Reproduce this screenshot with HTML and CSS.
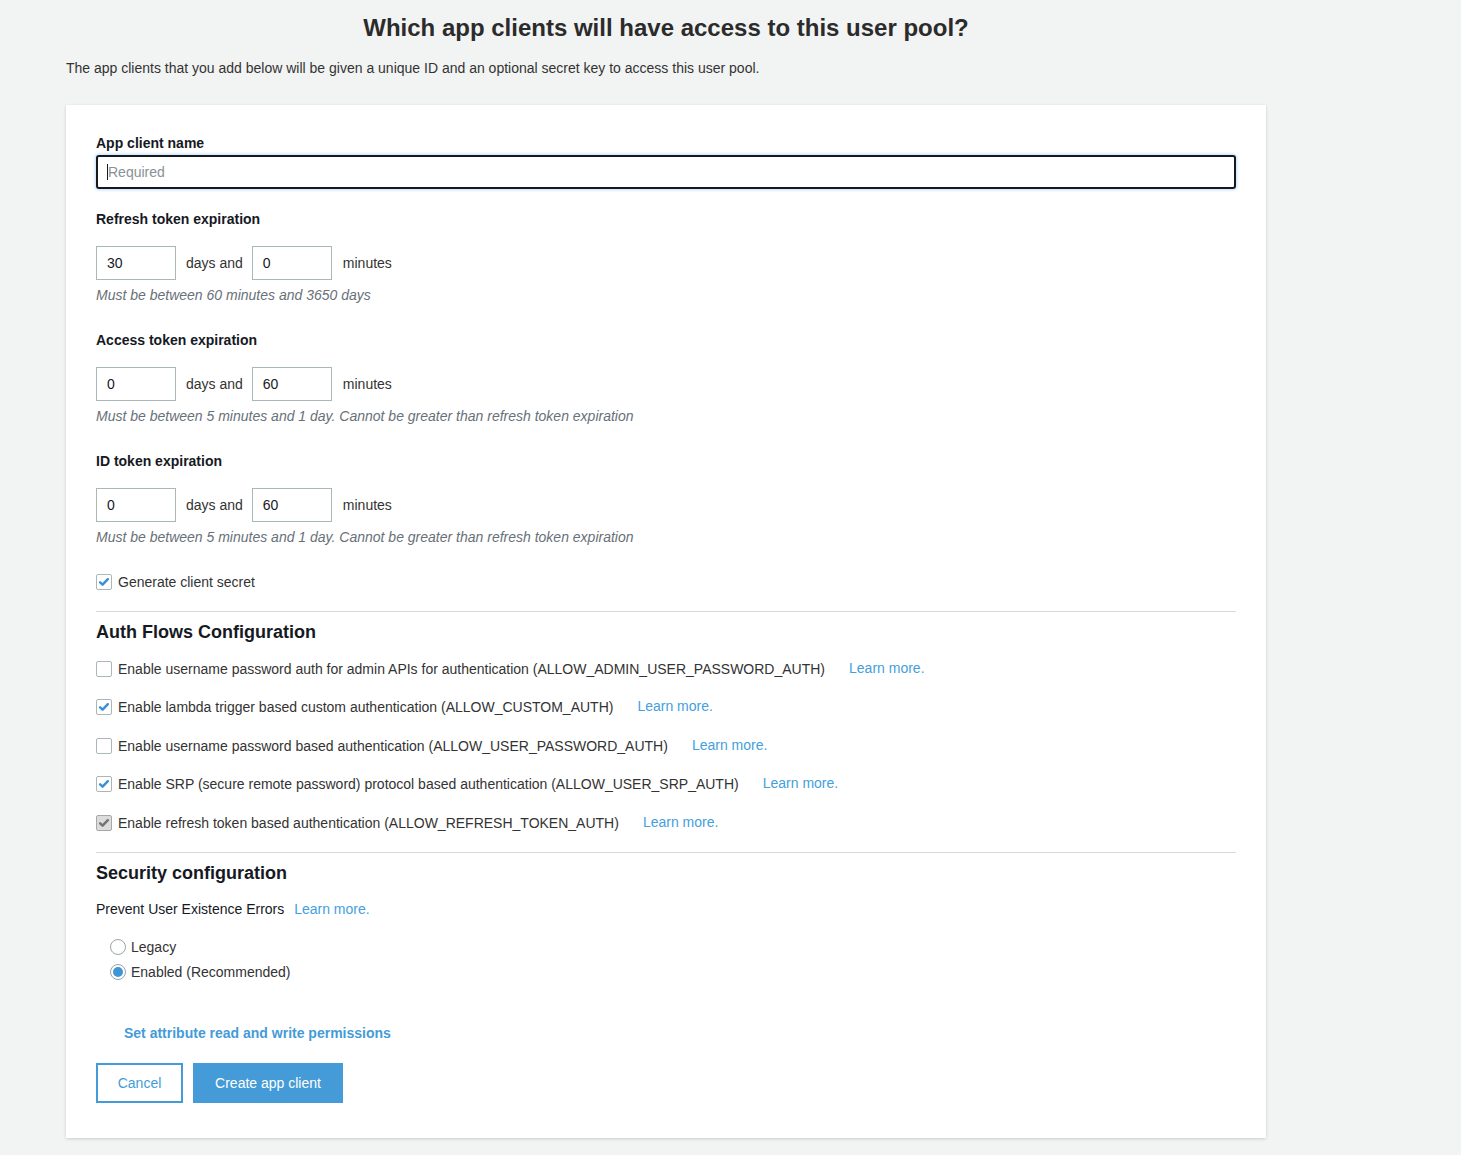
FILE: index.html
```html
<!DOCTYPE html>
<html>
<head>
<meta charset="utf-8">
<link rel="stylesheet" href="styles.css">
</head>
<body>
<div class="page">
  <h1 class="title">Which app clients will have access to this user pool?</h1>
  <p class="intro">The app clients that you add below will be given a unique ID and an optional secret key to access this user pool.</p>
  <div class="card">
    <label class="label">App client name</label>
    <div class="name-input"><span class="caret"></span><span class="placeholder">Required</span></div>

    <div class="label sect">Refresh token expiration</div>
    <div class="dur">
      <div class="box">30</div><span class="unit days">days and</span><div class="box">0</div><span class="unit mins">minutes</span>
    </div>
    <div class="hint">Must be between 60 minutes and 3650 days</div>

    <div class="label sect">Access token expiration</div>
    <div class="dur">
      <div class="box">0</div><span class="unit days">days and</span><div class="box">60</div><span class="unit mins">minutes</span>
    </div>
    <div class="hint">Must be between 5 minutes and 1 day. Cannot be greater than refresh token expiration</div>

    <div class="label sect">ID token expiration</div>
    <div class="dur">
      <div class="box">0</div><span class="unit days">days and</span><div class="box">60</div><span class="unit mins">minutes</span>
    </div>
    <div class="hint">Must be between 5 minutes and 1 day. Cannot be greater than refresh token expiration</div>

    <div class="check-row secret">
      <span class="cb checked"><svg viewBox="0 0 16 16"><path d="M3.6 8.4 L6.4 11 L12.4 4.8" /></svg></span>
      <span>Generate client secret</span>
    </div>

    <hr class="rule first-rule">
    <h2 class="heading">Auth Flows Configuration</h2>

    <div class="flows">
      <div class="check-row">
        <span class="cb"></span>
        <span>Enable username password auth for admin APIs for authentication (ALLOW_ADMIN_USER_PASSWORD_AUTH)</span>
        <a class="learn">Learn more.</a>
      </div>
      <div class="check-row">
        <span class="cb checked"><svg viewBox="0 0 16 16"><path d="M3.6 8.4 L6.4 11 L12.4 4.8" /></svg></span>
        <span>Enable lambda trigger based custom authentication (ALLOW_CUSTOM_AUTH)</span>
        <a class="learn">Learn more.</a>
      </div>
      <div class="check-row">
        <span class="cb"></span>
        <span>Enable username password based authentication (ALLOW_USER_PASSWORD_AUTH)</span>
        <a class="learn">Learn more.</a>
      </div>
      <div class="check-row">
        <span class="cb checked"><svg viewBox="0 0 16 16"><path d="M3.6 8.4 L6.4 11 L12.4 4.8" /></svg></span>
        <span>Enable SRP (secure remote password) protocol based authentication (ALLOW_USER_SRP_AUTH)</span>
        <a class="learn">Learn more.</a>
      </div>
      <div class="check-row">
        <span class="cb disabled"><svg viewBox="0 0 16 16"><path d="M3.6 8.4 L6.4 11 L12.4 4.8" /></svg></span>
        <span>Enable refresh token based authentication (ALLOW_REFRESH_TOKEN_AUTH)</span>
        <a class="learn">Learn more.</a>
      </div>
    </div>

    <hr class="rule second-rule">
    <h2 class="heading">Security configuration</h2>
    <div class="prevent">Prevent User Existence Errors <a class="learn">Learn more.</a></div>

    <div class="radios">
      <div class="radio-row"><span class="rb"></span><span>Legacy</span></div>
      <div class="radio-row"><span class="rb on"></span><span>Enabled (Recommended)</span></div>
    </div>

    <a class="attr-link">Set attribute read and write permissions</a>

    <div class="actions">
      <button class="btn cancel">Cancel</button>
      <button class="btn primary">Create app client</button>
    </div>
  </div>
</div>
</body>
</html>
```

FILE: styles.css
```css
* { box-sizing: border-box; }
html, body { margin: 0; padding: 0; }
body {
  background: #f2f3f3;
  font-family: "Liberation Sans", Arial, sans-serif;
  font-size: 14px;
  line-height: 20px;
  color: #333;
  min-height: 1155px;
}
.page {
  width: 1200px;
  margin-left: 66px;
  padding-top: 13px;
}
.title {
  margin: 0;
  text-align: center;
  font-size: 24px;
  line-height: 30px;
  font-weight: bold;
  color: #2b2b2b;
}
.intro {
  margin: 15px 0 0 0;
  line-height: 20px;
  color: #333;
}
.card {
  margin-top: 27px;
  background: #fff;
  padding: 28px 30px 35px 30px;
  box-shadow: 0 1px 3px 0 rgba(0,0,0,.16);
}
.label {
  display: block;
  font-weight: bold;
  color: #16191f;
  line-height: 20px;
}
.name-input {
  margin-top: 2px;
  height: 34px;
  border: 2px solid #16191f;
  border-radius: 3px;
  box-shadow: 0 0 3px 1px rgba(80,160,240,.35);
  display: flex;
  align-items: center;
  padding-left: 9px;
}
.caret {
  width: 1px;
  height: 16px;
  background: #16191f;
}
.placeholder { color: #879196; }
.sect { margin-top: 20px; }
.hint + .sect { margin-top: 25px; }
.dur {
  margin-top: 17px;
  display: flex;
  align-items: center;
}
.box {
  width: 80px;
  height: 34px;
  border: 1px solid #aab7b8;
  padding-left: 10px;
  line-height: 32px;
  color: #16191f;
}
.unit { color: #333; }
.days { margin: 0 9px 0 10px; }
.mins { margin: 0 0 0 11px; }
.hint {
  margin-top: 5px;
  font-style: italic;
  color: #687078;
}
.check-row {
  display: flex;
  align-items: center;
  line-height: 20px;
}
.check-row .cb { margin-right: 6px; }
.secret { margin-top: 25px; }
.cb {
  width: 16px;
  height: 16px;
  border: 1px solid #aab7b8;
  border-radius: 2px;
  background: #fff;
  flex: none;
  display: inline-flex;
}
.cb svg { width: 14px; height: 14px; }
.cb svg path { fill: none; stroke: #3b8fd6; stroke-width: 2.8; stroke-linecap: round; stroke-linejoin: round; }
.cb.disabled { background: #dcdcdc; border-color: #a9a9a9; }
.cb.disabled svg path { stroke: #727272; }
.rule {
  border: 0;
  border-top: 1px solid #d5dbdb;
  margin: 0;
}
.first-rule { margin-top: 19px; }
.second-rule { margin-top: 19px; }
.heading {
  margin: 8px 0 0 0;
  font-size: 18px;
  line-height: 24px;
  font-weight: bold;
  color: #16191f;
}
.flows { margin-top: 15px; display: flex; flex-direction: column; gap: 18.4px; }
.learn {
  color: #44a0dc;
  margin-left: 24px;
  position: relative;
  top: -1px;
}
.prevent { margin-top: 14px; color: #16191f; }
.prevent .learn { margin-left: 6px; top: 0; }
.radios {
  margin-top: 18px;
  padding-left: 14px;
  display: flex;
  flex-direction: column;
  gap: 5px;
}
.radio-row { display: flex; align-items: center; }
.rb {
  width: 16px;
  height: 16px;
  border-radius: 50%;
  border: 1px solid #9aa4a8;
  background: #fff;
  margin-right: 5px;
  flex: none;
  display: inline-flex;
  align-items: center;
  justify-content: center;
}
.rb.on::after {
  content: "";
  width: 10px;
  height: 10px;
  border-radius: 50%;
  background: #3f96d6;
}
.attr-link {
  display: block;
  margin-top: 41px;
  margin-left: 28px;
  font-weight: bold;
  color: #449bd8;
}
.actions {
  margin-top: 20px;
  display: flex;
  gap: 10px;
}
.btn {
  height: 40px;
  font-family: "Liberation Sans", Arial, sans-serif;
  font-size: 14px;
  padding: 0;
  cursor: pointer;
}
.cancel {
  width: 87px;
  background: #fff;
  border: 2px solid #449bd8;
  color: #449bd8;
}
.primary {
  width: 150px;
  background: #449bd8;
  border: 0;
  color: #fff;
}
```
